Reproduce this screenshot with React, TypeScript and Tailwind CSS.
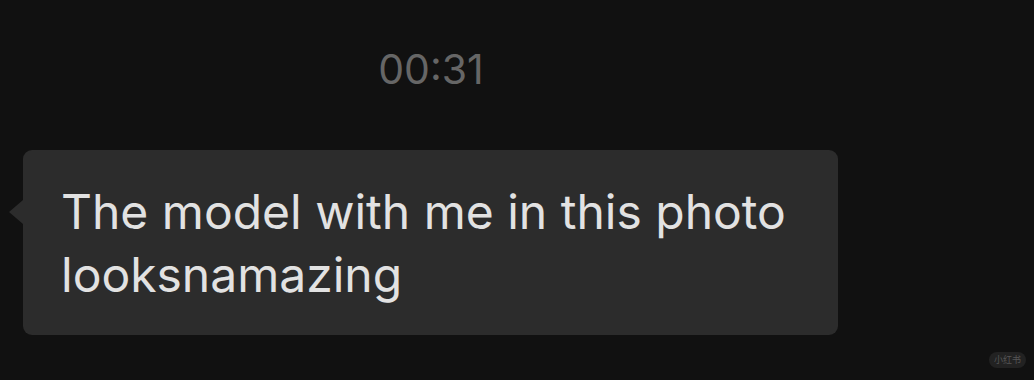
import React from "react";

export default function App() {
  return (
    <div className="w-[1034px] h-[380px] bg-[#111111] relative overflow-hidden" style={{ fontFamily: "Inter, 'Liberation Sans', sans-serif" }}>
      <div className="flex justify-center pt-[45px]">
        <div className="text-[41px] leading-[48px] text-[#666666] ml-[-172px]">00:31</div>
      </div>
      <div className="mt-[57px] ml-[23px] relative w-[815px] h-[185px] bg-[#2c2c2c] rounded-[9px] px-[38px] pt-[30px]">
        <div className="absolute left-[-14px] top-[50px] w-0 h-0 border-y-[12px] border-y-transparent border-r-[14px] border-r-[#2c2c2c]" />
        <div className="text-[48px] leading-[63px] text-[#e2e2e2]">
          The model with me in this photo<br />looksnamazing
        </div>
      </div>
      <div className="absolute right-[8px] bottom-[12px] px-[5px] h-[16px] rounded-full bg-[#222222] text-[#555555] text-[9px] leading-[16px]" style={{ fontFamily: "'Noto Sans CJK SC', sans-serif" }}>小红书</div>
    </div>
  );
}
